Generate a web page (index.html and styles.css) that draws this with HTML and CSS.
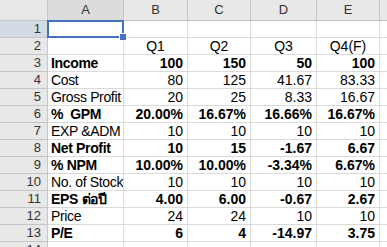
FILE: index.html
```html
<!DOCTYPE html>
<html>
<head>
<meta charset="utf-8">
<link rel="stylesheet" href="styles.css">
</head>
<body>
<div class="sheet">
  <div class="hd corner"></div>
  <div class="hd col sel">A</div>
  <div class="hd col">B</div>
  <div class="hd col">C</div>
  <div class="hd col">D</div>
  <div class="hd col">E</div>
  <div class="hd col"></div>

  <div class="hd row selrow">1</div>
  <div class="c active"><span class="handle"></span></div><div class="c"></div><div class="c"></div><div class="c"></div><div class="c"></div><div class="c"></div>

  <div class="hd row">2</div>
  <div class="c"></div><div class="c ctr">Q1</div><div class="c ctr">Q2</div><div class="c ctr">Q3</div><div class="c ctr">Q4(F)</div><div class="c"></div>

  <div class="hd row">3</div>
  <div class="c t b">Income</div><div class="c n b">100</div><div class="c n b">150</div><div class="c n b">50</div><div class="c n b">100</div><div class="c"></div>

  <div class="hd row">4</div>
  <div class="c t">Cost</div><div class="c n">80</div><div class="c n">125</div><div class="c n">41.67</div><div class="c n">83.33</div><div class="c"></div>

  <div class="hd row">5</div>
  <div class="c t">Gross Profit</div><div class="c n">20</div><div class="c n">25</div><div class="c n">8.33</div><div class="c n">16.67</div><div class="c"></div>

  <div class="hd row">6</div>
  <div class="c t b">%  GPM</div><div class="c n b">20.00%</div><div class="c n b">16.67%</div><div class="c n b">16.66%</div><div class="c n b">16.67%</div><div class="c"></div>

  <div class="hd row">7</div>
  <div class="c t">EXP &amp;ADM</div><div class="c n">10</div><div class="c n">10</div><div class="c n">10</div><div class="c n">10</div><div class="c"></div>

  <div class="hd row">8</div>
  <div class="c t b">Net Profit</div><div class="c n b">10</div><div class="c n b">15</div><div class="c n b">-1.67</div><div class="c n b">6.67</div><div class="c"></div>

  <div class="hd row">9</div>
  <div class="c t b">% NPM</div><div class="c n b">10.00%</div><div class="c n b">10.00%</div><div class="c n b">-3.34%</div><div class="c n b">6.67%</div><div class="c"></div>

  <div class="hd row">10</div>
  <div class="c t">No. of Stock</div><div class="c n">10</div><div class="c n">10</div><div class="c n">10</div><div class="c n">10</div><div class="c"></div>

  <div class="hd row">11</div>
  <div class="c t b">EPS ต่อปี</div><div class="c n b">4.00</div><div class="c n b">6.00</div><div class="c n b">-0.67</div><div class="c n b">2.67</div><div class="c"></div>

  <div class="hd row">12</div>
  <div class="c t">Price</div><div class="c n">24</div><div class="c n">24</div><div class="c n">10</div><div class="c n">10</div><div class="c"></div>

  <div class="hd row">13</div>
  <div class="c t b">P/E</div><div class="c n b">6</div><div class="c n b">4</div><div class="c n b">-14.97</div><div class="c n b">3.75</div><div class="c"></div>

  <div class="hd row">14</div>
  <div class="c"></div><div class="c"></div><div class="c"></div><div class="c"></div><div class="c"></div><div class="c"></div>
</div>
</body>
</html>
```

FILE: styles.css
```css
html, body {
  margin: 0;
  padding: 0;
  background: #ffffff;
  overflow: hidden;
}

.sheet {
  display: grid;
  grid-template-columns: 48px 76px 64px 63px 66px 63px 20px;
  grid-template-rows: 21px;
  grid-auto-rows: 17px;
  font-family: "Liberation Sans", Arial, "DejaVu Sans", sans-serif;
  font-size: 14px;
  color: #000;
}

.hd {
  box-sizing: border-box;
  background: #e8e8e8;
  border-right: 1px solid #c6c6c6;
  border-bottom: 1px solid #c6c6c6;
  font-size: 13px;
  color: #333;
  overflow: hidden;
}

.corner {
  background: #e8e8e8;
}

.col {
  text-align: center;
  line-height: 20px;
}

.col.sel {
  background: #dcdcdc;
}

.row {
  text-align: right;
  padding-right: 6px;
  line-height: 16px;
}

.row.selrow {
  background: #d3dbe5;
}

.c {
  box-sizing: border-box;
  border-right: 1px solid #dadada;
  border-bottom: 1px solid #dadada;
  padding: 0 3px;
  line-height: 16px;
  white-space: pre;
  overflow: hidden;
  position: relative;
}

.c.t {
  letter-spacing: -0.35px;
  padding-right: 0;
}

.c.n {
  text-align: right;
  padding-right: 4px;
}

.c.ctr {
  text-align: center;
}

.c.b {
  font-weight: bold;
}

.c.active {
  border: 2px solid #4472bf;
  margin: -1px 0 0 -1px;
  overflow: visible;
  z-index: 2;
}

.handle {
  position: absolute;
  right: -4px;
  bottom: -4px;
  width: 6px;
  height: 6px;
  background: #4472bf;
  border: 1px solid #ffffff;
  box-sizing: content-box;
  margin: -1px;
}
```
